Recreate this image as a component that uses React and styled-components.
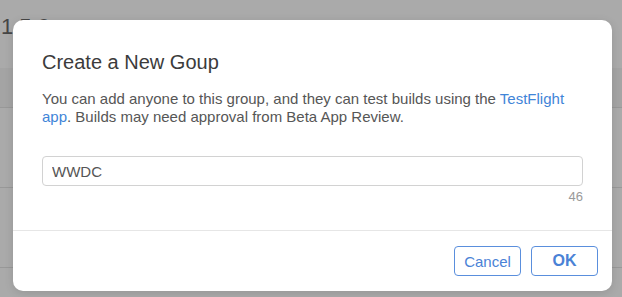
import React from "react";
import styled, { createGlobalStyle } from "styled-components";

const GlobalStyle = createGlobalStyle`
  html, body {
    margin: 0;
    padding: 0;
    background: #aaaaaa;
    font-family: "Liberation Sans", Arial, sans-serif;
  }
`;

const Page = styled.div`
  position: relative;
  width: 622px;
  height: 297px;
  overflow: hidden;
  background: #aaaaaa;
`;

const Version = styled.div`
  height: 68px;
  padding: 14px 0 0 1px;
  box-sizing: border-box;
  font-size: 22px;
  color: #464646;
`;

const TableHead = styled.div`
  height: 40px;
  background: #a4a4a4;
  border-bottom: 1px solid #989898;
  box-sizing: border-box;
`;

const Row = styled.div`
  height: 80px;
  border-bottom: 1px solid #989898;
  box-sizing: border-box;
  display: grid;
  grid-template-columns: 185px 185px;
  padding: 22px 0 0 28px;
`;

const Status = styled.div`
  display: flex;
  align-items: center;
  gap: 5px;
  font-size: 15px;
  color: #454545;
`;

const Dot = styled.span`
  width: 10px;
  height: 10px;
  border-radius: 50%;
  background: #4f9a22;
`;

const Dialog = styled.div`
  position: absolute;
  left: 13px;
  top: 20px;
  width: 599px;
  height: 271px;
  background: #fff;
  border-radius: 10px;
  box-shadow: 0 2px 10px rgba(0, 0, 0, 0.12);
  display: flex;
  flex-direction: column;
`;

const Body = styled.div`
  flex: 1;
  padding: 29px 29px 0 29px;
`;

const Title = styled.h2`
  margin: 0;
  font-size: 20px;
  font-weight: normal;
  line-height: 26px;
  color: #3b3b3b;
`;

const Text = styled.p`
  margin: 15px 0 0;
  font-size: 15px;
  line-height: 18px;
  color: #565656;
`;

const Link = styled.a`
  color: #3f85d8;
  text-decoration: none;
`;

const Input = styled.input`
  display: block;
  width: 100%;
  box-sizing: border-box;
  height: 30px;
  margin-top: 30px;
  padding: 0 9px;
  border: 1px solid #d2d2d2;
  border-radius: 4px;
  font-family: inherit;
  font-size: 15px;
  color: #555;
  outline: none;
`;

const Counter = styled.div`
  text-align: right;
  font-size: 13px;
  line-height: 16px;
  margin-top: 3px;
  color: #9a9a9a;
`;

const Footer = styled.div`
  border-top: 1px solid #e6e6e6;
  display: flex;
  justify-content: flex-end;
  gap: 10px;
  padding: 15px 14px 15px 0;
`;

const Button = styled.button`
  width: 67px;
  height: 30px;
  box-sizing: border-box;
  border: 1px solid #5a8fdd;
  border-radius: 4px;
  background: #fff;
  font-family: inherit;
  font-size: ${(p) => (p.$primary ? "16px" : "15px")};
  font-weight: ${(p) => (p.$primary ? "bold" : "normal")};
  color: #4a82d6;
  padding: 0;
`;

export default function App() {
  return (
    <Page>
      <GlobalStyle />
      <Version>1.5.0</Version>
      <TableHead />
      <Row />
      <Row />
      <Row>
        <Status>
          <Dot />
          Testing
        </Status>
        <Status>
          <Dot />
          Testing
        </Status>
      </Row>
      <Dialog>
        <Body>
          <Title>Create a New Goup</Title>
          <Text>
            You can add anyone to this group, and they can test builds using the{" "}
            <Link href="#">TestFlight app</Link>. Builds may need approval from Beta App Review.
          </Text>
          <Input defaultValue="WWDC" />
          <Counter>46</Counter>
        </Body>
        <Footer>
          <Button>Cancel</Button>
          <Button $primary>OK</Button>
        </Footer>
      </Dialog>
    </Page>
  );
}
